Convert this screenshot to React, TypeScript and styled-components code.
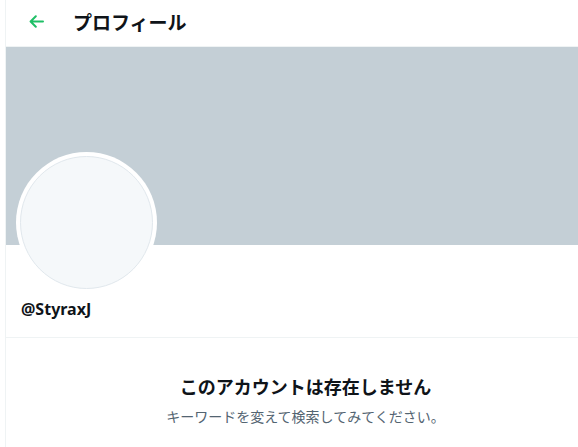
import React from "react";
import styled, { createGlobalStyle } from "styled-components";

const GlobalStyle = createGlobalStyle`
  html, body {
    margin: 0;
    padding: 0;
    background: #ffffff;
    overflow: hidden;
  }
  body {
    font-family: "Noto Sans", "Noto Sans CJK JP", sans-serif;
    color: #0f1419;
  }
`;

const Page = styled.div`
  width: 578px;
  height: 447px;
  overflow: hidden;
  padding-left: 5px;
  box-sizing: border-box;
`;

const Column = styled.main`
  width: 601px;
  height: 447px;
  border-left: 1px solid #eff3f4;
  border-right: 1px solid #eff3f4;
  box-sizing: border-box;
  display: flex;
  flex-direction: column;
`;

const Header = styled.header`
  height: 47px;
  flex-shrink: 0;
  display: flex;
  align-items: center;
  border-bottom: 1px solid #eff3f4;
  padding: 0 0 3px 22px;
  box-sizing: border-box;
  gap: 29px;
`;

const BackButton = styled.button`
  width: 16px;
  height: 16px;
  padding: 0;
  border: none;
  background: none;
  display: flex;
  align-items: center;
  justify-content: center;
  color: #1fbf66;
`;

const Title = styled.h1`
  margin: 0;
  font-family: "Noto Sans CJK JP", sans-serif;
  font-size: 19px;
  font-weight: 700;
  line-height: 24px;
  color: #0f1419;
`;

const Banner = styled.div`
  height: 198px;
  background: #c4cfd6;
  flex-shrink: 0;
`;

const ProfileInfo = styled.section`
  padding: 0 0 0 10px;
  display: flex;
  flex-direction: column;
  border-bottom: 1px solid #eff3f4;
  height: 92px;
`;

const Avatar = styled.div`
  width: 141px;
  height: 141px;
  margin-top: -93px;
  border-radius: 50%;
  background: #ffffff;
  padding: 4px;
  box-sizing: border-box;
`;

const AvatarInner = styled.div`
  width: 100%;
  height: 100%;
  border-radius: 50%;
  background: #f5f8fa;
  border: 1px solid #e1e8ed;
  box-sizing: border-box;
`;

const Handle = styled.div`
  margin-top: 6px;
  padding-left: 5px;
  font-family: "Noto Sans", sans-serif;
  font-size: 16px;
  font-weight: 700;
  line-height: 20px;
  color: #0f1419;
`;

const Empty = styled.section`
  display: flex;
  flex-direction: column;
  align-items: center;
  padding-top: 36px;
  gap: 8px;
`;

const EmptyTitle = styled.h2`
  margin: 0;
  font-family: "Noto Sans CJK JP", sans-serif;
  font-size: 18px;
  font-weight: 700;
  line-height: 24px;
  color: #0f1419;
`;

const EmptyText = styled.p`
  margin: 0;
  font-family: "Noto Sans CJK JP", sans-serif;
  font-size: 14px;
  line-height: 20px;
  color: #536471;
`;

const ArrowLeft = () => (
  <svg width="15" height="13" viewBox="0 0 15 13" fill="none">
    <path
      d="M14 6.5H1.8M6.8 1.3L1.6 6.5l5.2 5.2"
      stroke="currentColor"
      strokeWidth="2"
      strokeLinecap="round"
      strokeLinejoin="round"
    />
  </svg>
);

export default function App() {
  return (
    <>
      <GlobalStyle />
      <Page>
        <Column>
          <Header>
            <BackButton aria-label="戻る">
              <ArrowLeft />
            </BackButton>
            <Title>プロフィール</Title>
          </Header>
          <Banner />
          <ProfileInfo>
            <Avatar>
              <AvatarInner />
            </Avatar>
            <Handle>@StyraxJ</Handle>
          </ProfileInfo>
          <Empty>
            <EmptyTitle>このアカウントは存在しません</EmptyTitle>
            <EmptyText>キーワードを変えて検索してみてください。</EmptyText>
          </Empty>
        </Column>
      </Page>
    </>
  );
}
